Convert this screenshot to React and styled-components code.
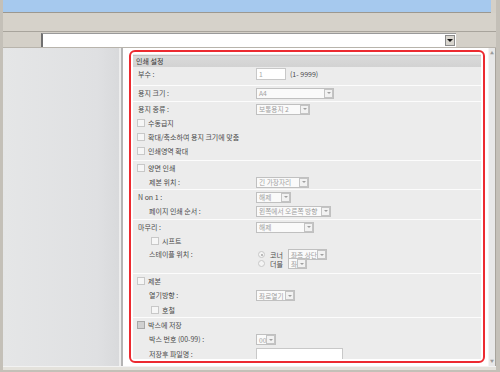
import React from "react";
import styled, { createGlobalStyle } from "styled-components";

const Global = createGlobalStyle`
  html, body {
    margin: 0;
    padding: 0;
    width: 500px;
    height: 372px;
    overflow: hidden;
    background: #cfcbc3;
  }
  * { box-sizing: border-box; }
`;

const FONT = `"Noto Sans CJK KR", "Noto Sans", "Liberation Sans", sans-serif`;

const Window = styled.div`
  width: 500px;
  height: 372px;
  display: flex;
  flex-direction: column;
  background: #d4d0c8;
  border-left: 3px solid #c4c0b8;
  border-right: 4px solid #c4c0b8;
  font-family: ${FONT};
`;

const TitleBar = styled.div`
  height: 13px;
  background: #a6c9ee;
  border-bottom: 1px solid #9c9890;
  margin-right: 5px;
`;

const Toolbar = styled.div`
  height: 19px;
  background: #d6d2ca;
  border-bottom: 1px solid #a8a49c;
`;

const AddressRow = styled.div`
  height: 15px;
  display: flex;
  align-items: center;
  padding-left: 38px;
  padding-right: 40px;
  background: #d4d0c8;
`;

const AddressInput = styled.div`
  flex: 1;
  height: 14px;
  background: #fff;
  border-left: 2px solid #707070;
  border-top: 1px solid #9a9a9a;
  display: flex;
  justify-content: flex-end;
  align-items: center;
  padding-right: 1px;
`;

const DropButton = styled.div`
  width: 10px;
  height: 11px;
  background: #d8d5ce;
  border: 1px solid #8a8a8a;
  display: flex;
  align-items: center;
  justify-content: center;
  &::after {
    content: "";
    border-left: 3px solid transparent;
    border-right: 3px solid transparent;
    border-top: 3px solid #111;
  }
`;

const Main = styled.div`
  flex: 1;
  display: flex;
  min-height: 0;
  border-top: 1px solid #b8b4ac;
`;

const Sidebar = styled.div`
  width: 120px;
  background: linear-gradient(to right, #e5e6e7, #dfe0e2 80%, #d8d9db);
  border-right: 2px solid #b4b4b4;
  box-shadow: inset -2px 0 0 #eeeeee;
`;

const ContentPane = styled.div`
  flex: 1;
  background: #fff;
  padding: 2px 3px 3px 6px;
  display: flex;
`;

const RedFrame = styled.div`
  flex: 1;
  border: 2px solid #ec2a30;
  border-radius: 6px;
  padding: 2px;
  background: #fff;
  display: flex;
`;

const Panel = styled.div`
  flex: 1;
  background: #ececec;
  display: flex;
  flex-direction: column;
  overflow: hidden;
`;

const PanelHeader = styled.div`
  flex: none;
  height: 12px;
  margin-top: 1px;
  padding-left: 3px;
  background: linear-gradient(to bottom, #dadada, #d2d2d2);
  border-top: 1px solid #c4c4c4;
  color: #333;
  font-size: 7px;
  line-height: 11px;
`;

const Section = styled.div`
  flex: none;
  padding-bottom: ${(p) => p.$pb || 0}px;
  & + & {
    border-top: 1px solid #fcfcfc;
  }
`;

const Row = styled.div`
  display: grid;
  grid-template-columns: ${(p) => 123 - (p.$indent ? 16 : 5)}px 1fr;
  align-items: ${(p) => (p.$top ? "start" : "center")};
  height: ${(p) => p.$h || 14}px;
  padding-left: ${(p) => (p.$indent ? 16 : 5)}px;
  padding-top: ${(p) => p.$pt || 0}px;
`;

const Label = styled.span`
  color: #4a4a4a;
  font-size: 7px;
  line-height: 9px;
  white-space: nowrap;
`;

const CheckRow = styled.label`
  display: flex;
  align-items: center;
  gap: 3px;
  height: ${(p) => p.$h || 14}px;
  padding-left: ${(p) => (p.$indent ? 18 : 4)}px;
  color: #4a4a4a;
  font-size: 7px;
  white-space: nowrap;
`;

const Box = styled.span`
  width: 8px;
  height: 8px;
  border: 1px solid ${(p) => (p.$dark ? "#a8a8a8" : "#c8c8c8")};
  background: ${(p) => (p.$dark ? "#d0d0d0" : "#f6f6f6")};
`;

const Select = styled.div`
  width: ${(p) => p.$w}px;
  height: 11px;
  border: 1px solid #c0c0c0;
  background: #fafafa;
  display: flex;
  align-items: center;
  justify-content: space-between;
  color: #a0a0a0;
  font-size: 6.7px;
  padding-left: 2px;
  white-space: nowrap;
  overflow: hidden;
`;

const Arrow = styled.span`
  flex: none;
  width: 9px;
  height: 9px;
  border: 1px solid #c4c4c4;
  background: #f2f2f2;
  display: flex;
  align-items: center;
  justify-content: center;
  &::after {
    content: "";
    border-left: 2px solid transparent;
    border-right: 2px solid transparent;
    border-top: 2px solid #a0a0a0;
  }
`;

const TextInput = styled.div`
  width: ${(p) => p.$w}px;
  height: 12px;
  border: 1px solid #c8c8c8;
  background: #fff;
  color: #a8a8a8;
  font-size: 6.7px;
  line-height: 10px;
  padding-left: 2px;
`;

const Inline = styled.div`
  display: flex;
  align-items: center;
  gap: 4px;
`;

const Hint = styled.span`
  color: #4a4a4a;
  font-size: 7px;
`;

const RadioStack = styled.div`
  display: flex;
  flex-direction: column;
  padding-left: 2px;
`;

const RadioLine = styled.div`
  display: flex;
  align-items: center;
  height: 9px;
  gap: 5px;
  color: #4a4a4a;
  font-size: 7px;
`;

const Radio = styled.span`
  width: 7px;
  height: 7px;
  border-radius: 50%;
  border: 1px solid #c8c8c8;
  background: #f4f4f4;
  position: relative;
  &::after {
    content: "";
    display: ${(p) => (p.$on ? "block" : "none")};
    position: absolute;
    left: 1.5px;
    top: 1.5px;
    width: 2px;
    height: 2px;
    border-radius: 50%;
    background: #a8a8a8;
  }
`;

const Scrollbar = styled.div`
  width: 8px;
  background: #e8e8e8;
  border-left: 1px solid #f4f4f4;
  border-right: 1px solid #a8a49c;
  display: flex;
  flex-direction: column;
  justify-content: space-between;
  align-items: center;
  padding: 3px 0 3px;
  color: #9a9a9a;
  font-size: 4px;
  line-height: 4px;
`;

const BottomFrame = styled.div`
  height: 6px;
  background: #e4e2dc;
  border-top: 1px solid #f2f2f2;
  border-bottom: 2px solid #c4c0b8;
`;

const Sel = ({ w, children }) => (
  <Select $w={w}>
    <span>{children}</span>
    <Arrow />
  </Select>
);

const Check = ({ indent, dark, children }) => (
  <CheckRow $indent={indent}>
    <Box $dark={dark} />
    {children}
  </CheckRow>
);

export default function App() {
  return (
    <>
      <Global />
      <Window>
        <TitleBar />
        <Toolbar />
        <AddressRow>
          <AddressInput>
            <DropButton />
          </AddressInput>
        </AddressRow>
        <Main>
          <Sidebar />
          <ContentPane>
            <RedFrame>
              <Panel>
                <PanelHeader>인쇄 설정</PanelHeader>
                <Section $pb={4}>
                  <Row>
                    <Label>부수 :</Label>
                    <Inline>
                      <TextInput $w={30}>1</TextInput>
                      <Hint>(1- 9999)</Hint>
                    </Inline>
                  </Row>
                </Section>
                <Section $pb={1}>
                  <Row>
                    <Label>용지 크기 :</Label>
                    <Sel w={78}>A4</Sel>
                  </Row>
                </Section>
                <Section $pb={2}>
                  <Row>
                    <Label>용지 종류 :</Label>
                    <Sel w={54}>보통용지 2</Sel>
                  </Row>
                  <Check>수동급지</Check>
                  <Check>확대/축소하여 용지 크기에 맞춤</Check>
                  <Check>인쇄영역 확대</Check>
                </Section>
                <Section>
                  <Check>양면 인쇄</Check>
                  <Row $indent>
                    <Label>제본 위치 :</Label>
                    <Sel w={53}>긴 가장자리</Sel>
                  </Row>
                </Section>
                <Section $pb={1}>
                  <Row>
                    <Label>N on 1 :</Label>
                    <Sel w={35}>해제</Sel>
                  </Row>
                  <Row $indent>
                    <Label>페이지 인쇄 순서 :</Label>
                    <Sel w={75}>왼쪽에서 오른쪽 방향</Sel>
                  </Row>
                </Section>
                <Section $pb={5}>
                  <Row>
                    <Label>마무리 :</Label>
                    <Sel w={58}>해제</Sel>
                  </Row>
                  <Check indent>시프트</Check>
                  <Row $indent $top $h={20} $pt={2}>
                    <Label>스테이플 위치 :</Label>
                    <RadioStack>
                      <RadioLine>
                        <Radio $on />
                        코너
                        <Sel w={39}>좌측 상단</Sel>
                      </RadioLine>
                      <RadioLine>
                        <Radio />
                        더블
                        <Sel w={19}>좌</Sel>
                      </RadioLine>
                    </RadioStack>
                  </Row>
                </Section>
                <Section>
                  <Check>제본</Check>
                  <Row $indent $h={15}>
                    <Label>열기방향 :</Label>
                    <Sel w={39}>좌로열기</Sel>
                  </Row>
                  <Check indent>호철</Check>
                </Section>
                <Section>
                  <Check dark>박스에 저장</Check>
                  <Row $indent $h={15}>
                    <Label>박스 번호 (00-99) :</Label>
                    <Sel w={20}>00</Sel>
                  </Row>
                  <Row $indent>
                    <Label>저장후 파일명 :</Label>
                    <TextInput $w={87} />
                  </Row>
                </Section>
              </Panel>
            </RedFrame>
          </ContentPane>
          <Scrollbar>
            <span>▲</span>
            <span>▼</span>
          </Scrollbar>
        </Main>
        <BottomFrame />
      </Window>
    </>
  );
}
